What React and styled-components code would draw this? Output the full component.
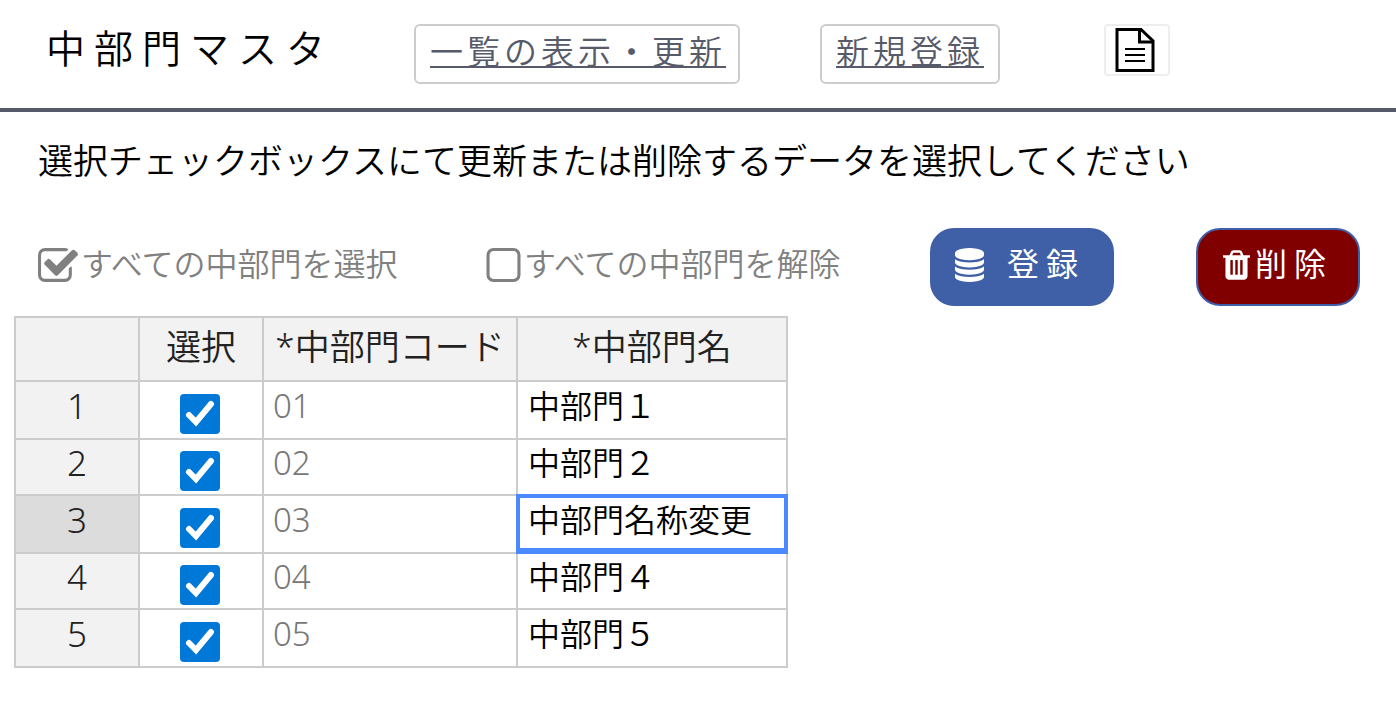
import React, { useState } from "react";
import styled, { createGlobalStyle } from "styled-components";

const GlobalStyle = createGlobalStyle`
  * {
    box-sizing: border-box;
  }

  body {
    margin: 0;
    background: #fff;
    color: #000;
    font-family: "Noto Sans CJK JP", sans-serif;
    font-weight: 350;
  }

  button {
    font: inherit;
    cursor: pointer;
  }
`;

const Header = styled.header`
  display: flex;
  align-items: flex-start;
  min-height: 112px;
  padding: 24px 32px 0 46px;
  border-bottom: 4px solid #565a69;
`;

const Title = styled.h1`
  flex: none;
  width: 368px;
  margin: 0;
  font-size: 39px;
  font-weight: 350;
  line-height: 44px;
  letter-spacing: 9px;
  white-space: nowrap;
`;

const NavLink = styled.a`
  flex: none;
  width: ${(props) => props.$width};
  height: 60px;
  margin-right: ${(props) => props.$gap};
  padding-left: 14px;
  border: 2px solid #ccc;
  border-radius: 6px;
  color: #565a69;
  font-size: 33px;
  line-height: 48px;
  letter-spacing: 4px;
  text-decoration: underline;
  text-decoration-thickness: 2px;
  text-decoration-skip-ink: none;
  text-underline-offset: 2px;
  white-space: nowrap;
`;

const FileButton = styled.button`
  display: flex;
  justify-content: center;
  align-items: center;
  width: 66px;
  height: 52px;
  padding: 0 4px 0 0;
  background: #fff;
  border: 2px solid #eee;
  border-radius: 4px;
`;

const Message = styled.p`
  margin: 0;
  padding: 24px 38px 0;
  font-size: 35px;
  line-height: 46px;
`;

const Toolbar = styled.div`
  display: flex;
  align-items: flex-start;
  padding: 46px 36px 10px 38px;
`;

const CheckAll = styled.button`
  display: flex;
  align-items: center;
  flex: none;
  width: ${(props) => props.$width};
  height: 74px;
  gap: 3px;
  padding: 0;
  background: none;
  border: 0;
  color: gray;
  font-size: 32px;
  white-space: nowrap;

  svg {
    flex: none;
  }
`;

const ActionButton = styled.button`
  display: flex;
  align-items: center;
  flex: none;
  width: ${(props) => props.$width};
  height: 78px;
  gap: ${(props) => props.$gap};
  margin-left: ${(props) => props.$left};
  padding: 0 0 4px ${(props) => props.$pad};
  background: ${(props) => props.$color};
  border: 2px solid #3f5fa6;
  border-radius: 24px;
  color: #fff;
  font-size: 32px;
  font-weight: 400;
  letter-spacing: 7px;
  white-space: nowrap;
`;

/* the glyphs sit low in their line box, so lift them level with the icon */
const Label = styled.span`
  padding-bottom: 6px;
  line-height: 44px;
`;

const Table = styled.table`
  width: 774px;
  margin: 0 14px 34px;
  table-layout: fixed;
  border-collapse: collapse;

  th,
  td {
    padding: 0;
    border: 2px solid #ccc;
    font-weight: 350;
    white-space: nowrap;
  }

  th {
    background: #f2f2f2;
    color: #222;
    font-family: "Noto Sans", "Noto Sans CJK JP", sans-serif;
    font-size: 35px;
    line-height: 48px;
  }

  thead th {
    height: 64px;
    padding-bottom: 4px;
  }

  tbody tr {
    height: 58px;
  }

  tbody tr:nth-child(even) {
    height: 56px;
  }
`;

const RowHead = styled.th`
  && {
    padding-bottom: 8px;
    background: ${(props) => (props.$active ? "#dcdcdc" : "#f2f2f2")};
    line-height: 46px;
  }
`;

const CheckCell = styled.td`
  && {
    padding: 8px 2px 0 0;
    vertical-align: middle;
  }
`;

const CodeCell = styled.td`
  && {
    padding: 0 0 8px 9px;
    color: #777;
    font-family: "Noto Sans", sans-serif;
    font-size: 33px;
    line-height: 46px;
  }
`;

const NameCell = styled.td`
  && {
    position: relative;
    padding: 0 0 12px 10px;
    font-size: 32px;
    line-height: 42px;
  }

  &::after {
    content: "";
    display: ${(props) => (props.$active ? "block" : "none")};
    position: absolute;
    inset: -2px;
    border: 4px solid #4b89ff;
    border-bottom-width: 6px;
  }
`;

const CheckBox = styled.label`
  display: grid;
  width: 40px;
  height: 40px;
  margin: 0 auto;
  cursor: pointer;

  input,
  svg {
    grid-area: 1 / 1;
    width: 40px;
    height: 40px;
    margin: 0;
  }

  input {
    appearance: none;
    background: #fff;
    border: 2px solid #767676;
    border-radius: 4px;
  }

  input:checked {
    background: #0078d7;
    border-color: #0078d7;
  }

  svg {
    visibility: hidden;
    pointer-events: none;
  }

  input:checked + svg {
    visibility: visible;
  }
`;

const FileIcon = () => (
  <svg width="40" height="44" viewBox="0 0 40 44" fill="none" stroke="#000">
    <path d="M2 1.500H26L38 13V42.500H2Z" strokeWidth="3" />
    <path d="M24.500 2V14H38" strokeWidth="3" />
    <path d="M10 21H30M10 27H30M10 33H30" strokeWidth="2" />
  </svg>
);

const CheckedIcon = () => (
  <svg width="40" height="34" viewBox="0 128 1664 1408" fill="currentColor">
    <path d="M1408 930v318q0 119-84.500 203.500t-203.500 84.500h-832q-119 0-203.500-84.500t-84.500-203.500v-832q0-119 84.500-203.500t203.500-84.500h832q63 0 117 25 15 7 18 23 3 17-9 29l-49 49q-10 10-23 10-3 0-9-2-23-6-45-6h-832q-66 0-113 47t-47 113v832q0 66 47 113t113 47h832q66 0 113-47t47-113v-254q0-13 9-22l64-64q10-10 23-10 6 0 12 3 20 8 20 29zm231-489l-814 814q-24 24-57 24t-57-24l-430-430q-24-24-24-57t24-57l110-110q24-24 57-24t57 24l263 263 647-647q24-24 57-24t57 24l110 110q24 24 24 57t-24 57z" />
  </svg>
);

const UncheckedIcon = () => (
  <svg width="35" height="34" viewBox="0 128 1408 1408" fill="currentColor">
    <path d="M1120 256h-832q-66 0-113 47t-47 113v832q0 66 47 113t113 47h832q66 0 113-47t47-113v-832q0-66-47-113t-113-47zm288 160v832q0 119-84.500 203.500t-203.500 84.500h-832q-119 0-203.500-84.500t-84.500-203.500v-832q0-119 84.500-203.500t203.500-84.500h832q119 0 203.500 84.500t84.500 203.500z" />
  </svg>
);

const DatabaseIcon = () => (
  <svg width="29" height="34" viewBox="0 0 1536 1792" fill="currentColor">
    <path d="M768 768q237 0 443-43t325-127v170q0 69-103 128t-280 93.500-385 34.500-385-34.500-280-93.500-103-128v-170q119 84 325 127t443 43zm0 768q237 0 443-43t325-127v170q0 69-103 128t-280 93.500-385 34.500-385-34.500-280-93.500-103-128v-170q119 84 325 127t443 43zm0-384q237 0 443-43t325-127v170q0 69-103 128t-280 93.500-385 34.500-385-34.500-280-93.500-103-128v-170q119 84 325 127t443 43zm0-1152q208 0 385 34.500t280 93.500 103 128v128q0 69-103 128t-280 93.500-385 34.500-385-34.500-280-93.500-103-128v-128q0-69 103-128t280-93.500 385-34.500z" />
  </svg>
);

const TrashIcon = () => (
  <svg width="27" height="30" viewBox="0 128 1408 1536" fill="currentColor">
    <path d="M512 1376v-704q0-14-9-23t-23-9h-64q-14 0-23 9t-9 23v704q0 14 9 23t23 9h64q14 0 23-9t9-23zm256 0v-704q0-14-9-23t-23-9h-64q-14 0-23 9t-9 23v704q0 14 9 23t23 9h64q14 0 23-9t9-23zm256 0v-704q0-14-9-23t-23-9h-64q-14 0-23 9t-9 23v704q0 14 9 23t23 9h64q14 0 23-9t9-23zm-544-992h448l-48-117q-7-9-17-11h-317q-10 2-17 11zm928 32v64q0 14-9 23t-23 9h-96v948q0 83-47 143.500t-113 60.500h-832q-66 0-113-58.500t-47-141.500v-952h-96q-14 0-23-9t-9-23v-64q0-14 9-23t23-9h309l70-167q15-37 54-63t79-26h320q40 0 79 26t54 63l70 167h309q14 0 23 9t9 23z" />
  </svg>
);

const departments = [
  { code: "01", name: "中部門１" },
  { code: "02", name: "中部門２" },
  { code: "03", name: "中部門名称変更" },
  { code: "04", name: "中部門４" },
  { code: "05", name: "中部門５" },
];

const App = () => {
  const [checked, setChecked] = useState(departments.map(() => true));
  const [active, setActive] = useState(2);

  const handleAll = (value) => {
    setChecked(departments.map(() => value));
  };
  const handleCheck = (index) => {
    setChecked(checked.map((c, i) => (i === index ? !c : c)));
  };

  return (
    <>
      <GlobalStyle />
      <Header>
        <Title>中部門マスタ</Title>
        <NavLink href="#list" $width="326px" $gap="80px">
          一覧の表示・更新
        </NavLink>
        <NavLink href="#new" $width="180px" $gap="104px">
          新規登録
        </NavLink>
        <FileButton type="button" aria-label="ファイル">
          <FileIcon />
        </FileButton>
      </Header>
      <main>
        <Message>
          選択チェックボックスにて更新または削除するデータを選択してください
        </Message>
        <Toolbar>
          <CheckAll type="button" $width="448px" onClick={() => handleAll(true)}>
            <CheckedIcon />
            <Label>すべての中部門を選択</Label>
          </CheckAll>
          <CheckAll
            type="button"
            $width="364px"
            onClick={() => handleAll(false)}
          >
            <UncheckedIcon />
            <Label>すべての中部門を解除</Label>
          </CheckAll>
          <ActionButton
            type="button"
            $width="184px"
            $left="80px"
            $pad="23px"
            $gap="23px"
            $color="#3f5fa6"
          >
            <DatabaseIcon />
            <Label>登録</Label>
          </ActionButton>
          <ActionButton
            type="button"
            $width="164px"
            $left="82px"
            $pad="25px"
            $gap="5px"
            $color="#800000"
          >
            <TrashIcon />
            <Label>削除</Label>
          </ActionButton>
        </Toolbar>
        <Table>
          <colgroup>
            <col width="124" />
            <col width="124" />
            <col width="254" />
            <col width="270" />
          </colgroup>
          <thead>
            <tr>
              <th aria-label="行番号"></th>
              <th>選択</th>
              <th>*中部門コード</th>
              <th>*中部門名</th>
            </tr>
          </thead>
          <tbody>
            {departments.map((item, index) => (
              <tr key={item.code}>
                <RowHead $active={index === active}>{index + 1}</RowHead>
                <CheckCell>
                  <CheckBox>
                    <input
                      type="checkbox"
                      aria-label={item.name}
                      checked={checked[index]}
                      onChange={() => handleCheck(index)}
                    />
                    <svg
                      viewBox="0 0 40 40"
                      fill="none"
                      stroke="#fff"
                      strokeWidth="6"
                    >
                      <path d="M9 21L16 28L31 10" strokeLinecap="round" />
                    </svg>
                  </CheckBox>
                </CheckCell>
                <CodeCell>{item.code}</CodeCell>
                <NameCell
                  $active={index === active}
                  onClick={() => setActive(index)}
                >
                  {item.name}
                </NameCell>
              </tr>
            ))}
          </tbody>
        </Table>
      </main>
    </>
  );
};

export default App;
